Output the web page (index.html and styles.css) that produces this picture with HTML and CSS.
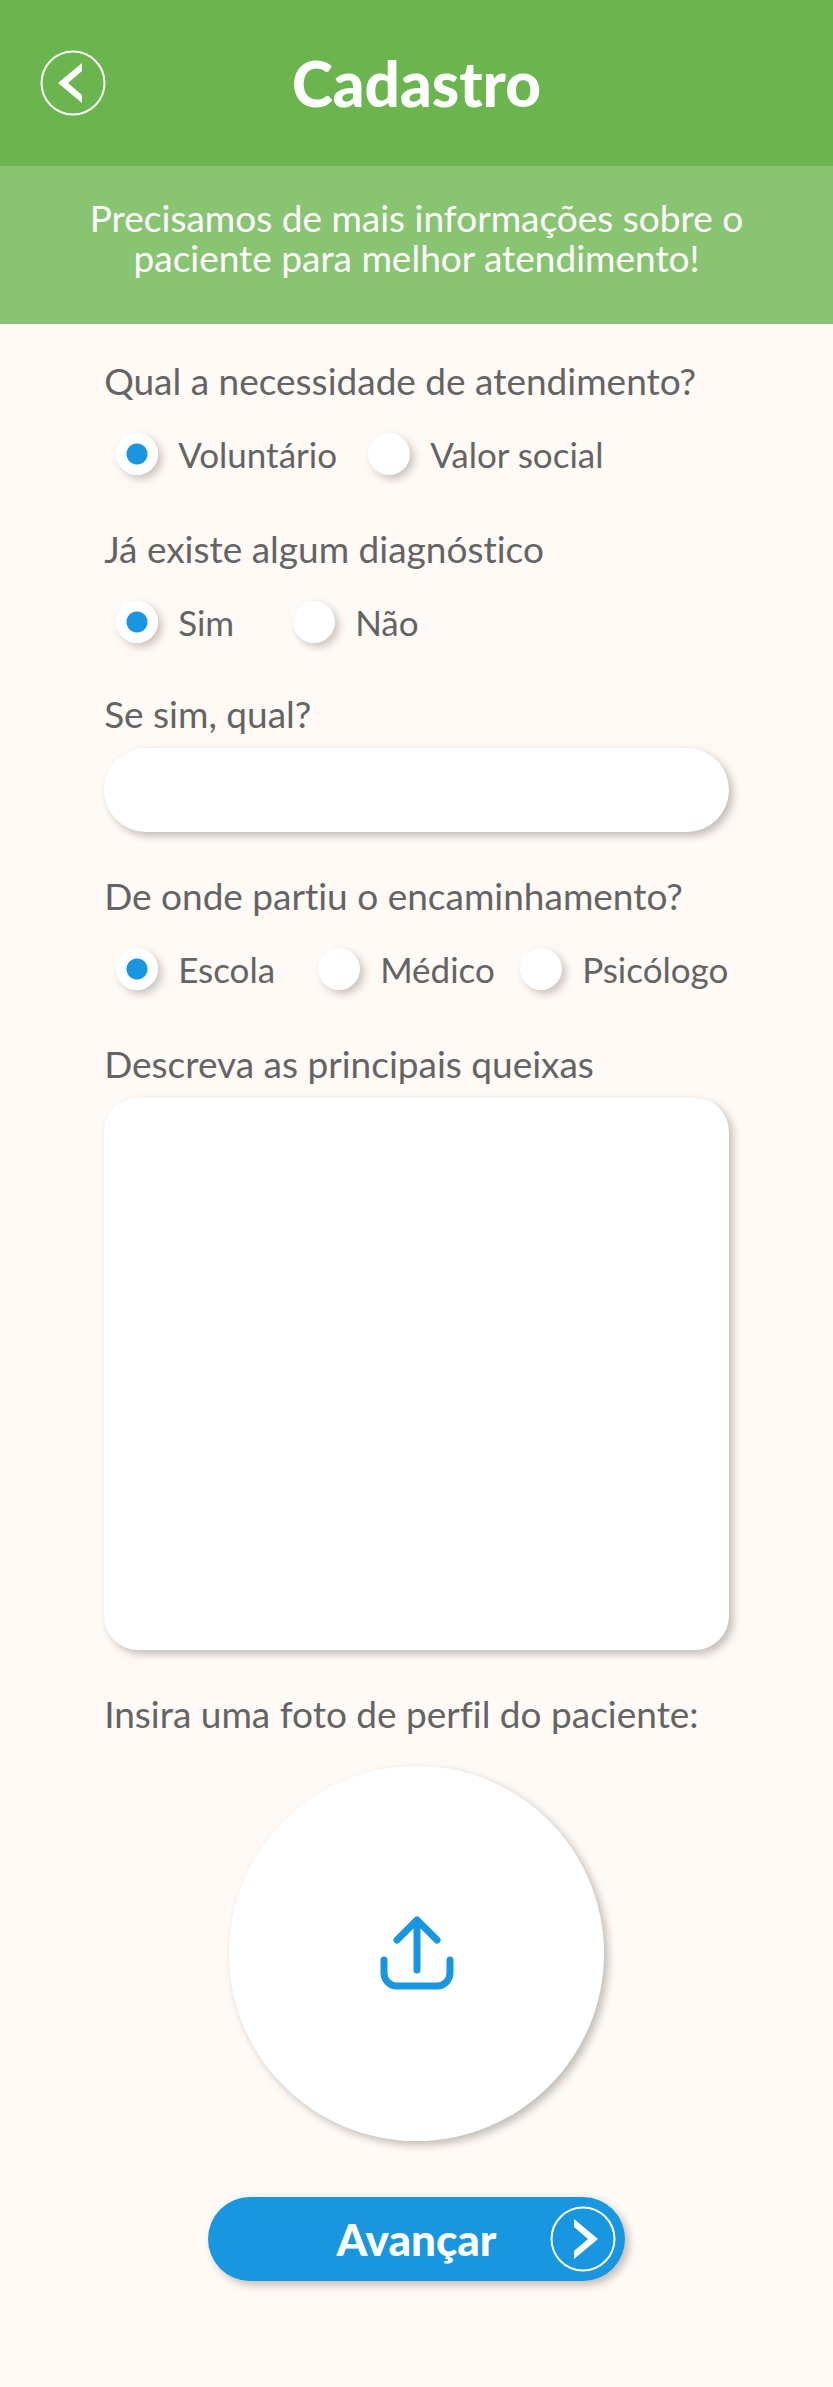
FILE: index.html
```html
<!DOCTYPE html>
<html lang="pt-BR">
<head>
<meta charset="utf-8">
<meta name="viewport" content="width=device-width, initial-scale=1">
<title>Cadastro</title>
<link rel="stylesheet" href="styles.css">
</head>
<body>
<header class="topbar">
  <button class="back" type="button" aria-label="Voltar">
    <svg class="round-icon" viewBox="0 0 66 66" aria-hidden="true"><circle cx="33" cy="33" r="31.5" fill="none" stroke="currentColor" stroke-width="2"/><path d="M42 13v8L28 33l14 12v8L18 33z" fill="currentColor"/></svg>
  </button>
  <h1 class="title">Cadastro</h1>
</header>
<div class="intro"><p class="intro-text">Precisamos de mais informações sobre o paciente para melhor atendimento!</p></div>
<form class="form">
  <fieldset class="group">
    <legend class="label">Qual a necessidade de atendimento?</legend>
    <div class="options options-wide">
      <label class="option"><input class="radio" type="radio" name="necessidade" checked>Voluntário</label>
      <label class="option"><input class="radio" type="radio" name="necessidade">Valor social</label>
    </div>
  </fieldset>
  <fieldset class="group group-followed">
    <legend class="label">Já existe algum diagnóstico</legend>
    <div class="options options-narrow">
      <label class="option"><input class="radio" type="radio" name="diagnostico" checked>Sim</label>
      <label class="option"><input class="radio" type="radio" name="diagnostico">Não</label>
    </div>
  </fieldset>
  <div class="field">
    <label class="label" for="qual">Se sim, qual?</label>
    <input class="text-input" id="qual" type="text">
  </div>
  <fieldset class="group">
    <legend class="label">De onde partiu o encaminhamento?</legend>
    <div class="options">
      <label class="option"><input class="radio" type="radio" name="origem" checked>Escola</label>
      <label class="option"><input class="radio" type="radio" name="origem">Médico</label>
      <label class="option"><input class="radio" type="radio" name="origem">Psicólogo</label>
    </div>
  </fieldset>
  <div class="field">
    <label class="label" for="queixas">Descreva as principais queixas</label>
    <textarea class="text-area" id="queixas"></textarea>
  </div>
  <div class="photo">
    <span class="label" id="foto">Insira uma foto de perfil do paciente:</span>
    <button class="upload" type="button" aria-labelledby="foto">
      <svg class="upload-icon" viewBox="0 0 80 80" fill="none" stroke="currentColor" stroke-width="7" stroke-linecap="round" stroke-linejoin="round" aria-hidden="true"><path d="M40 57V7M20 27 40 7l20 20M7 47v13a13 13 0 0 0 13 13h40a13 13 0 0 0 13-13V47"/></svg>
    </button>
  </div>
  <button class="next" type="submit">
    <span class="next-text">Avançar</span>
    <svg class="round-icon" viewBox="0 0 66 66" aria-hidden="true"><circle cx="33" cy="33" r="31.5" fill="none" stroke="currentColor" stroke-width="2"/><path d="M24 13v8l14 12-14 12v8l24-20z" fill="currentColor"/></svg>
  </button>
</form>
</body>
</html>
```
FILE: styles.css
```css
* { box-sizing: border-box; }

body {
  margin: 0;
  background: #fffaf5;
  color: #646464;
  font-family: Lato, "Open Sans", sans-serif;
  font-size: 37px;
  font-variant-ligatures: none;
  line-height: 40px;
}

button, input, textarea { font: inherit; border: 0; }
button { cursor: pointer; }

.topbar {
  display: grid;
  grid-template-columns: 66px 1fr 66px;
  align-items: center;
  padding: 50px 40px;
  background: #6ab54e;
  color: #fff;
}
.back {
  display: flex;
  padding: 0;
  background: none;
  color: inherit;
}
.round-icon { display: block; width: 66px; height: 66px; }
.title {
  margin: 0;
  font-size: 62px;
  font-weight: 900;
  line-height: 66px;
  text-align: center;
}

.intro {
  padding: 32px 72px 46px;
  background: #89c472;
  color: #fff;
  text-align: center;
}
.intro-text { margin: 0; }

.form {
  display: flex;
  flex-direction: column;
  width: 75%;
  margin: 0 auto;
  padding: 37px 0 106px;
}
.group {
  min-width: 0;
  margin: 0 0 54px;
  padding: 0;
  border: 0;
}
.group-followed { margin-bottom: 51px; }
.label { display: block; padding: 0; }
.options {
  --column: 202px;
  display: flex;
  flex-wrap: wrap;
  margin-top: 32px;
  padding-left: 12px;
  font-size: 35px;
}
.options-wide { --column: 252px; }
.options-narrow { --column: 177px; }
.option {
  display: flex;
  align-items: center;
  gap: 20px;
  min-width: var(--column);
}
.option:last-child { min-width: 0; }
.radio {
  appearance: none;
  flex: none;
  width: 42px;
  height: 42px;
  margin: 0;
  border-radius: 50%;
  background: #fff;
  box-shadow: 4px 4px 8px rgba(0, 0, 0, 0.22);
}
.radio:checked { background: radial-gradient(circle, #1896e0 10px, #fff 11px); }

.field {
  display: flex;
  flex-direction: column;
  gap: 14px;
  margin-bottom: 44px;
}
.text-input, .text-area {
  width: 100%;
  background: #fff;
  color: inherit;
  box-shadow: 4px 4px 8px rgba(0, 0, 0, 0.25);
}
.text-input { height: 84px; padding: 0 40px; border-radius: 42px; }
.text-area {
  display: block;
  height: 552px;
  padding: 28px 32px;
  border-radius: 34px;
  resize: none;
}

.photo { display: flex; flex-direction: column; gap: 32px; }
.upload {
  display: flex;
  align-items: center;
  justify-content: center;
  align-self: center;
  width: 60%;
  aspect-ratio: 1;
  border-radius: 50%;
  background: #fff;
  color: #1896e0;
  box-shadow: 4px 4px 8px rgba(0, 0, 0, 0.25);
}
.upload-icon { width: 80px; height: 80px; }

.next {
  display: grid;
  grid-template-columns: 66px 1fr 66px;
  align-items: center;
  align-self: center;
  width: 417px;
  max-width: 100%;
  margin-top: 56px;
  padding: 9px;
  border-radius: 42px;
  background: #1896e0;
  color: #fff;
  box-shadow: 4px 4px 8px rgba(0, 0, 0, 0.25);
}
.next-text {
  grid-column: 2;
  font-size: 44px;
  font-weight: 900;
  text-align: center;
}
```
